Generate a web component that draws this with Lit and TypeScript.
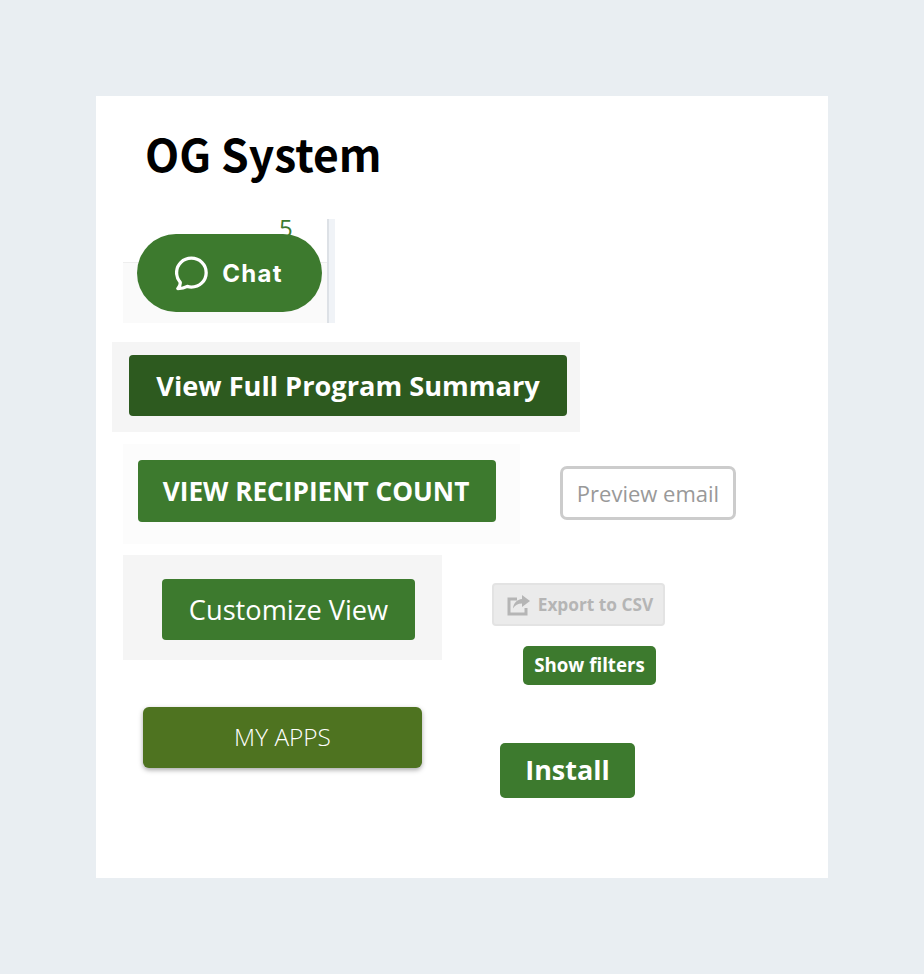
import { LitElement, html, css } from "lit";
import { customElement } from "lit/decorators.js";

@customElement("app-root")
export class AppRoot extends LitElement {
  static styles = css`
    :host {
      display: block;
      box-sizing: border-box;
      width: 924px;
      height: 974px;
      padding: 96px;
      background: #e9eef2;
      font-family: "Open Sans", "Noto Sans", sans-serif;
    }
    * { box-sizing: border-box; }
    .card {
      width: 732px;
      height: 782px;
      background: #fff;
      display: flex;
      flex-direction: column;
      align-items: flex-start;
    }
    h1 {
      margin: 26px 0 0 49px;
      height: 63px;
      font: 700 44.4px/62px "Noto Sans CJK JP", "Noto Sans", sans-serif;
      color: #000;
    }
    .btn {
      display: flex;
      align-items: center;
      justify-content: center;
      background: #3d7a2e;
      color: #fff;
      border-radius: 4px;
      white-space: nowrap;
    }
    .chat-panel {
      position: relative;
      margin: 34px 0 0 27px;
      width: 212px;
      height: 104px;
      display: flex;
      background: linear-gradient(#fff 0 43px, #eeeeee 43px 44px, #fafafa 44px);
      border-right: 6px solid #f0f3f7;
    }
    .chat-panel::after {
      content: "";
      position: absolute;
      top: 0;
      right: 0;
      bottom: 0;
      width: 2px;
      background: #dde1e6;
    }
    .count {
      position: absolute;
      top: -7px;
      left: 156px;
      font: 400 24px/32px "Open Sans", sans-serif;
      color: #3d7a2e;
    }
    .chat {
      position: absolute;
      left: 14px;
      top: 15px;
      width: 185px;
      height: 78px;
      border-radius: 39px;
      gap: 14px;
      padding-right: 1px;
      font: 700 24px/30px Inter, sans-serif;
      letter-spacing: 1.3px;
    }
    .chat svg { width: 33px; height: 35px; }
    .chat span { margin-top: 2px; }
    .summary-panel {
      margin: 19px 0 0 16px;
      width: 468px;
      height: 90px;
      padding: 13px 0 0 17px;
      background: #f5f5f5;
    }
    .summary {
      width: 438px;
      height: 61px;
      background: #2d5a1f;
      font-size: 27.2px;
      font-weight: 700;
    }
    .row {
      margin-top: 12px;
      display: flex;
      align-items: flex-start;
    }
    .recipient-panel {
      margin-left: 27px;
      width: 397px;
      height: 100px;
      padding: 16px 0 0 15px;
      background: #fcfcfc;
    }
    .recipient {
      width: 358px;
      height: 62px;
      padding-right: 2px;
      font-size: 26.2px;
      font-weight: 700;
    }
    .preview {
      margin: 22px 0 0 40px;
      width: 176px;
      height: 54px;
      display: flex;
      align-items: center;
      justify-content: center;
      border: 3px solid #cccccc;
      border-radius: 7px;
      background: #fff;
      color: #999;
      font-size: 22px;
    }
    .lower {
      margin-top: 11px;
      display: flex;
      align-items: flex-start;
    }
    .left { display: flex; flex-direction: column; align-items: flex-start; margin-left: 27px; }
    .customize-panel {
      width: 319px;
      height: 105px;
      padding: 24px 0 0 39px;
      background: #f5f5f5;
    }
    .customize {
      width: 253px;
      height: 61px;
      font-size: 27.2px;
    }
    .apps {
      margin: 47px 0 0 20px;
      width: 279px;
      height: 61px;
      padding-bottom: 2px;
      border-radius: 6px;
      background: #4e7320;
      box-shadow: 0 2px 5px rgba(0, 0, 0, 0.35);
      font-size: 24.4px;
      font-weight: 300;
    }
    .right { display: flex; flex-direction: column; align-items: flex-start; margin-left: 50px; }
    .export {
      margin-top: 28px;
      width: 173px;
      height: 43px;
      gap: 7px;
      padding-left: 3px;
      display: flex;
      align-items: center;
      justify-content: center;
      background: #ebebeb;
      border: 2px solid #e3e3e3;
      border-radius: 4px;
      color: #b5b5b5;
      font-size: 17.3px;
      font-weight: 700;
      white-space: nowrap;
    }
    .export svg { width: 24px; height: 22px; }
    .filters {
      margin: 20px 0 0 31px;
      width: 133px;
      height: 39px;
      padding-bottom: 2px;
      border-radius: 5px;
      font-size: 18.7px;
      font-weight: 700;
    }
    .install {
      margin: 58px 0 0 8px;
      width: 135px;
      height: 55px;
      padding-bottom: 2px;
      border-radius: 5px;
      font-size: 27px;
      font-weight: 700;
    }
  `;

  render() {
    return html`
      <div class="card">
        <h1>OG System</h1>
        <div class="chat-panel">
          <span class="count">5</span>
          <div class="btn chat">
            <svg viewBox="4 3 29 30.500" fill="none" stroke="#fff" stroke-width="2.900" stroke-linecap="round" stroke-linejoin="round">
              <path d="M6.500 31.500c2.800 0 5.900-.5 8.300-1.900 1.200.4 2.300.6 3.600.6 7.200 0 13-5.600 13-12.700S25.600 4.800 18.400 4.800 5.400 10.400 5.400 17.500c0 3.300 1.200 6.200 3.200 8.500.2 2-.7 4-2.100 5.500z" />
            </svg>
            <span>Chat</span>
          </div>
        </div>
        <div class="summary-panel">
          <div class="btn summary">View Full Program Summary</div>
        </div>
        <div class="row">
          <div class="recipient-panel">
            <div class="btn recipient">VIEW RECIPIENT COUNT</div>
          </div>
          <div class="preview">Preview email</div>
        </div>
        <div class="lower">
          <div class="left">
            <div class="customize-panel">
              <div class="btn customize">Customize View</div>
            </div>
            <div class="btn apps">MY APPS</div>
          </div>
          <div class="right">
            <div class="export">
              <svg viewBox="0 0 24 22" fill="none">
                <path d="M10 5H2v15h17v-6" stroke="#b5b5b5" stroke-width="3" />
                <path d="M15 1l8 6-8 6V9.500c-4 0-7 1.500-9 5 .5-5.500 4-9 9-9.500z" fill="#b5b5b5" />
              </svg>
              <span>Export to CSV</span>
            </div>
            <div class="btn filters">Show filters</div>
            <div class="btn install">Install</div>
          </div>
        </div>
      </div>
    `;
  }
}
